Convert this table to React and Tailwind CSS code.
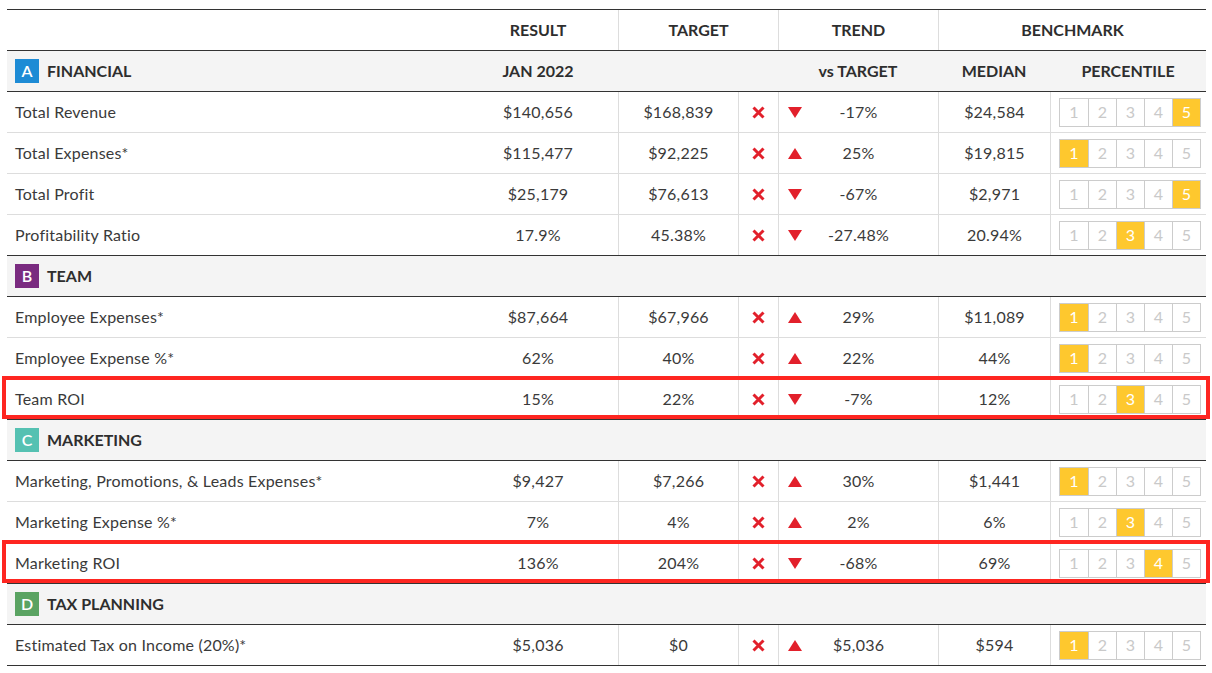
import React from "react";

const GRID = "grid grid-cols-[451px_160px_120px_40px_160px_112px_156px]";

const sections = [
  {
    letter: "A",
    title: "FINANCIAL",
    color: "bg-[#1d8bd5]",
    rows: [
      ["Total Revenue", "$140,656", "$168,839", "down", "-17%", "$24,584", 5],
      ["Total Expenses*", "$115,477", "$92,225", "up", "25%", "$19,815", 1],
      ["Total Profit", "$25,179", "$76,613", "down", "-67%", "$2,971", 5],
      ["Profitability Ratio", "17.9%", "45.38%", "down", "-27.48%", "20.94%", 3],
    ],
  },
  {
    letter: "B",
    title: "TEAM",
    color: "bg-[#7a2b80]",
    rows: [
      ["Employee Expenses*", "$87,664", "$67,966", "up", "29%", "$11,089", 1],
      ["Employee Expense %*", "62%", "40%", "up", "22%", "44%", 1],
      ["Team ROI", "15%", "22%", "down", "-7%", "12%", 3, true],
    ],
  },
  {
    letter: "C",
    title: "MARKETING",
    color: "bg-[#55c1b2]",
    rows: [
      ["Marketing, Promotions, & Leads Expenses*", "$9,427", "$7,266", "up", "30%", "$1,441", 1],
      ["Marketing Expense %*", "7%", "4%", "up", "2%", "6%", 3],
      ["Marketing ROI", "136%", "204%", "down", "-68%", "69%", 4, true],
    ],
  },
  {
    letter: "D",
    title: "TAX PLANNING",
    color: "bg-[#5aa362]",
    rows: [
      ["Estimated Tax on Income (20%)*", "$5,036", "$0", "up", "$5,036", "$594", 1],
    ],
  },
];

function Badge({ letter, color }) {
  return (
    <div className={`w-[24px] h-[24px] ${color} text-white text-[16px] font-semibold flex items-center justify-center`}>
      {letter}
    </div>
  );
}

function XMark() {
  return (
    <svg width="13" height="13" viewBox="0 0 13 13">
      <path d="M1.5 1.5 L11.5 11.5 M11.5 1.5 L1.5 11.5" stroke="#e2202b" strokeWidth="3" strokeLinecap="butt" />
    </svg>
  );
}

function Tri({ dir }) {
  return (
    <svg width="14" height="11" viewBox="0 0 14 11">
      {dir === "down" ? (
        <polygon points="0,0 14,0 7,11" fill="#e2202b" />
      ) : (
        <polygon points="7,0 14,11 0,11" fill="#e2202b" />
      )}
    </svg>
  );
}

function Percentile({ value }) {
  return (
    <div className="flex border border-[#cccccc] h-[29px]">
      {[1, 2, 3, 4, 5].map((n) => (
        <div
          key={n}
          className={`w-[28px] flex items-center justify-center text-[16px] ${n > 1 ? "border-l border-[#cccccc]" : ""} ${
            n === value ? "bg-[#fec82e] text-white" : "text-[#c9c9c9]"
          }`}
        >
          {n}
        </div>
      ))}
    </div>
  );
}

function SectionHeader({ letter, title, color }) {
  return (
    <div className="h-[41px] bg-[#f4f4f4] border-b border-[#333333] flex items-center pl-[8px] gap-[8px]">
      <Badge letter={letter} color={color} />
      <span className="text-[16px] font-bold text-[#2e2e2e]">{title}</span>
    </div>
  );
}

function DataRow({ row, dark }) {
  const [label, result, target, dir, trend, median, pct, highlight] = row;
  const line = "border-l border-[#dddddd]";
  return (
    <div className={`relative ${GRID} h-[41px] border-b ${dark ? "border-[#333333]" : "border-[#dddddd]"} text-[16px] tracking-[0.2px] text-[#3a3a3a]`}>
      <div className="flex items-center pl-[8px]">{label}</div>
      <div className="flex items-center justify-center">{result}</div>
      <div className={`flex items-center justify-center ${line}`}>{target}</div>
      <div className={`flex items-center justify-center ${line}`}>
        <XMark />
      </div>
      <div className={`grid grid-cols-[32px_1fr_32px] items-center ${line}`}>
        <div className="pl-[9px] flex items-center">
          <Tri dir={dir} />
        </div>
        <div className="text-center">{trend}</div>
        <div />
      </div>
      <div className={`flex items-center justify-center ${line}`}>{median}</div>
      <div className={`flex items-center pl-[8px] ${line}`}>
        <Percentile value={pct} />
      </div>
      {highlight && (
        <div className="absolute left-[-5px] right-[-4px] top-[-3px] bottom-[0px] border-[4px] border-[#fe2621] pointer-events-none" />
      )}
    </div>
  );
}

export default function App() {
  return (
    <div className="bg-white w-[1212px] h-[673px] pt-[9px] pl-[7px] font-['Lato','Liberation_Sans',sans-serif]">
      <div className="w-[1199px] border-t border-[#333333]">
        {/* header row 1 */}
        <div className={`${GRID} h-[41px] border-b border-[#333333] text-[16px] font-bold text-[#2e2e2e]`}>
          <div />
          <div className="flex items-center justify-center">RESULT</div>
          <div className="col-span-2 flex items-center justify-center border-l border-[#dddddd]">TARGET</div>
          <div className="flex items-center justify-center border-l border-[#dddddd]">TREND</div>
          <div className="col-span-2 flex items-center justify-center border-l border-[#dddddd]">BENCHMARK</div>
        </div>
        {/* header row 2 with section A */}
        <div className={`${GRID} h-[41px] bg-[#f4f4f4] border-b border-[#333333] text-[16px] font-bold text-[#2e2e2e]`}>
          <div className="flex items-center pl-[8px] gap-[8px]">
            <Badge letter="A" color="bg-[#1d8bd5]" />
            <span>FINANCIAL</span>
          </div>
          <div className="flex items-center justify-center">JAN 2022</div>
          <div className="col-span-2" />
          <div className="flex items-center justify-center">vs TARGET</div>
          <div className="flex items-center justify-center">MEDIAN</div>
          <div className="flex items-center justify-center">PERCENTILE</div>
        </div>
        {sections.map((s, si) => (
          <React.Fragment key={s.letter}>
            {si > 0 && <SectionHeader letter={s.letter} title={s.title} color={s.color} />}
            {s.rows.map((r, ri) => (
              <DataRow key={ri} row={r} dark={ri === s.rows.length - 1} />
            ))}
          </React.Fragment>
        ))}
      </div>
    </div>
  );
}
